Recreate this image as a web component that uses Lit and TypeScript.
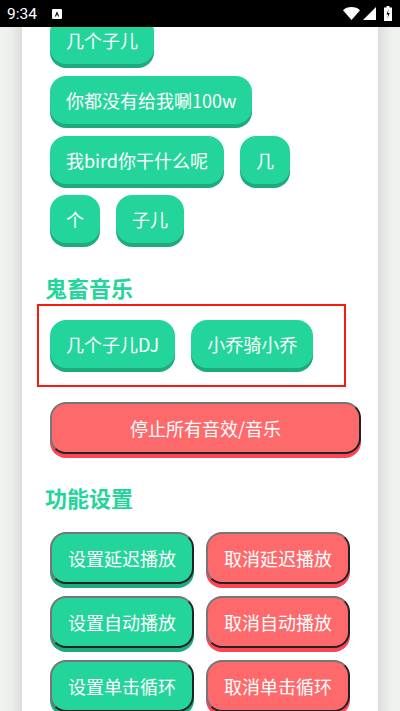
import { LitElement, html, css } from "lit";
import { customElement } from "lit/decorators.js";

@customElement("app-root")
export class AppRoot extends LitElement {
  static styles = css`
    :host { display: block; width: 400px; height: 711px; overflow: hidden; font-family: "Noto Sans CJK SC", "Noto Sans", sans-serif; }
    .status { height: 27px; background: #000; color: #fff; display: flex; align-items: center; padding: 0 8px 0 7px; font: 15.5px Roboto, sans-serif; box-sizing: border-box; }
    .status .a { margin-left: 15px; width: 10px; height: 10px; display:block; }
    .status .sp { flex: 1; }
    .status svg { display: block; }
    .wifi { margin-right: 3px; }
    .signal { margin-right: 8px; }
    .page { height: 684px; background: linear-gradient(90deg, #f1f2ef 0, #eef0ec 10px, #dcdedb 22px, #fff 22px, #fff 378px, #dcdedb 378px, #eef0ec 390px, #f1f2ef 400px); overflow: hidden; }
    .card { margin: -10.67px 50px 0; width: 300px; display: flex; flex-direction: column; }
    .wrap { display: flex; flex-wrap: wrap; gap: 7.67px 16px; }
    .btn { height: 48px; padding: 0 16px; box-sizing: border-box; border-radius: 16px; background: #24d59b; color: #fff; font-size: 18px; font-weight: 400; display: flex; align-items: center; justify-content: center; box-shadow: 0 4px 0 #1daa7e; white-space: nowrap; margin-bottom: 4px; }
    .btn.o { height: 52px; border: 2px solid; border-color: #767676 #222 #222 #767676; }
    .red { background: #fe6a6c; }
    .red.o { box-shadow: 0 4px 0 #fd4558; }
    h2 { margin: 0 0 0 -5px; color: #24d59b; font-size: 22px; font-weight: 700; line-height: 30px; }
    .t1 { margin-top: 24.67px; }
    .box { margin: 2px 0 0 -13px; border: 2px solid #fb1a10; padding: 14px 11px 0; height: 83px; box-sizing: border-box; width: 309px; }
    .stop { margin-top: 15px; width: 311px; }
    .t2 { margin-top: 24.5px; }
    .grid { margin-top: 19.5px; display: grid; grid-template-columns: 144px 144px; gap: 8px 12px; }
    .grid .btn { padding: 0; }
  `;

  render() {
    const cols = ["延迟播放", "自动播放", "单击循环"];
    return html`
      <div class="status">
        <span>9:34</span>
        <svg class="a" viewBox="0 0 10 10"><rect width="10" height="10" rx="1" fill="#fff"/><path d="M2.800 7.600 5 2.200l2.200 5.400H6L5 5 4 7.600z" fill="#000"/></svg>
        <span class="sp"></span>
        <svg class="wifi" width="17" height="13" viewBox="0 0 17 13"><path d="M0 3.200C2.200 1.200 5 0 8.500 0s6.300 1.200 8.500 3.200L8.500 13z" fill="#fff"/></svg>
        <svg class="signal" width="13" height="13" viewBox="0 0 13 13"><path d="M13 0v13H0z" fill="#fff"/></svg>
        <svg width="8" height="15" viewBox="0 0 8 15"><path d="M2.500 0h3v1.500H8V15H0V1.500h2.500z" fill="#fff"/><path d="M4.700 3 2.500 8.500h1.700L3.300 12.500l2.500-5.500H4z" fill="#000"/></svg>
      </div>
      <div class="page">
        <div class="card">
          <div class="wrap">
            <div class="btn">几个子儿</div>
            <div class="btn">你都没有给我唰100w</div>
            <div class="btn">我bird你干什么呢</div>
            <div class="btn">几</div>
            <div class="btn">个</div>
            <div class="btn">子儿</div>
          </div>
          <h2 class="t1">鬼畜音乐</h2>
          <div class="box">
            <div class="wrap">
              <div class="btn">几个子儿DJ</div>
              <div class="btn">小乔骑小乔</div>
            </div>
          </div>
          <div class="btn red o stop">停止所有音效/音乐</div>
          <h2 class="t2">功能设置</h2>
          <div class="grid">
            ${cols.map(c => html`
              <div class="btn o">设置${c}</div>
              <div class="btn red o">取消${c}</div>
            `)}
          </div>
        </div>
      </div>
    `;
  }
}
